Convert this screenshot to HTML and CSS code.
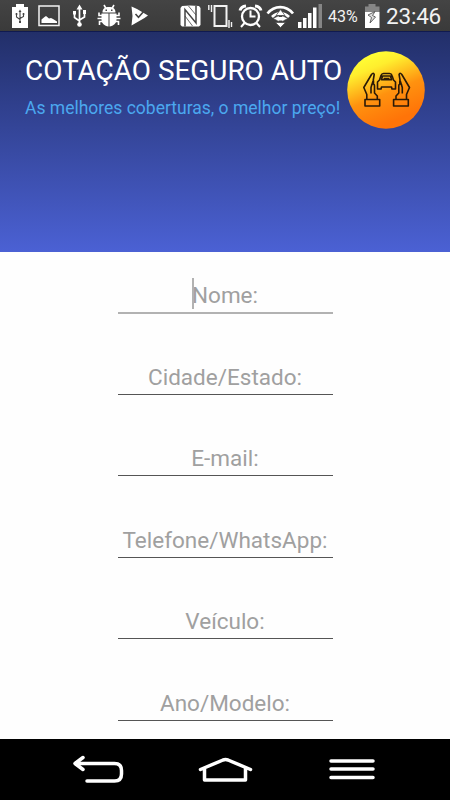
FILE: index.html
```html
<!DOCTYPE html>
<html lang="pt-BR">
<head>
    <meta charset="UTF-8">
    <meta name="viewport" content="width=device-width, initial-scale=1.0">
    <title>Cotação Seguro Auto</title>
    <link rel="stylesheet" href="styles.css">
</head>
<body>
    <div class="screen">
        <!-- Status bar -->
        <div class="status-bar">
            <div class="status-left">
                <svg width="23" height="32" viewBox="10 0 23 32">
                    <path fill="#fff" d="M16 4h8v3h4v21H12V7h4z"/>
                    <path fill="none" stroke="#444" stroke-width="1.1" d="M20 11v11M16.500 14v3l3.500 2.500M23.500 14v2.500L20 18.500"/>
                    <path fill="#444" d="M18.500 12l1.500-2.500 1.500 2.500zM19 21h2v2h-2zM15.700 13h1.600v2h-1.600zM22.700 13h1.600v2h-1.600z"/>
                </svg>
                <svg width="33" height="32" viewBox="33 0 33 32">
                    <path fill="none" stroke="#f2f2f2" stroke-width="1.500" d="M39 6h20v19.500H39z"/>
                    <path fill="#fff" d="M41.500 23v-3.500l3-2.500 1.500-1 3 2.500 2-.5 2 1 4 2.500V23z"/>
                </svg>
                <svg width="26" height="32" viewBox="66 0 26 32">
                    <path fill="none" stroke="#fff" stroke-width="1.700" d="M79.500 8v17M74.500 13v4.500l5 3.500M84.500 12v5l-5 3"/>
                    <path fill="#fff" d="M76.500 9.500l3-5 3 5zM73 11h3v3.500h-3zM83 10h3v4h-3z"/>
                    <circle cx="79.500" cy="24.500" r="2.300" fill="#fff"/>
                </svg>
                <svg width="35" height="32" viewBox="92 0 35 32">
                    <path fill="#fff" d="M102.500 12.500c0-4 2.500-5.500 6.500-5.500s6.500 1.500 6.500 5.500zM101.500 13.500h7V26.500c-4-.5-7-3-7-7zM109.500 13.500h7v6c0 4-3 6.500-7 7z"/>
                    <path fill="none" stroke="#fff" stroke-width="1.600" d="M106 8.500L104 5M112 8.500l2-3.500M102.500 15.500H99v-3M102.500 18.500h-5M103 21.500h-3.500V25M115.500 15.500h3.500v-3M115.500 18.500h5M115 21.500h3.500V25"/>
                    <path fill="#444" d="M105.500 9.500h1.500V11h-1.500zM111 9.500h1.500V11H111z"/>
                </svg>
                <svg width="30" height="32" viewBox="127 0 30 32">
                    <path fill="#fff" d="M131.500 6.500l5.500 2.500 11 6.500-3.500 2.500-13 7.500 1-9.500z"/>
                    <path fill="none" stroke="#444" stroke-width="1.600" d="M135.500 14l3 3.200 6-6.700"/>
                </svg>
            </div>
            <div class="status-right">
                <svg width="27" height="32" viewBox="177 0 27 32">
                    <path fill="#fff" d="M182 6l8-.5 9 .5 1.500 2v17l-1.500 1.500h-17L180.500 25V8z"/>
                    <path fill="none" stroke="#444" stroke-width="1.500" d="M185 26.500V9.500l11 13.500V6"/>
                    <path fill="none" stroke="#444" stroke-width=".8" d="M188.500 6l7.500 9M185 16l7.500 10"/>
                </svg>
                <svg width="32" height="32" viewBox="204 0 32 32">
                    <path fill="none" stroke="#f2f2f2" stroke-width="2" d="M214.500 6h12v20h-12z"/>
                    <path fill="none" stroke="#f2f2f2" stroke-width="1.400" d="M211.500 5v7M208.800 5v5M229 20v8M231.500 22v5"/>
                </svg>
                <svg width="29" height="32" viewBox="236 0 29 32">
                    <circle cx="250.500" cy="16.500" r="8.500" fill="none" stroke="#fff" stroke-width="2.300"/>
                    <path fill="none" stroke="#fff" stroke-width="2" d="M250.500 10.500v6h5M244.500 23l-3.500 4M256.500 23l3.500 4"/>
                    <path fill="none" stroke="#fff" stroke-width="3" d="M240 10.500q1-4 6-4.500M261 10.500q-1-4-6-4.500"/>
                </svg>
                <svg width="31" height="32" viewBox="265 0 31 32">
                    <path fill="none" stroke="#fff" stroke-width="2.700" d="M267.500 13.500c7-8.500 18.500-8.500 25.500 0M272 17c5-5 12-5 17 0"/>
                    <path fill="#fff" stroke="#444" stroke-width=".7" d="M280.500 27.500l-5-5h10zM280.500 9.500l4.500 6h-9zM273 18.500l6-3v6zM288 18.500l-6-3v6z"/>
                    <path fill="#fff" d="M277.500 17h6v3.500h-6z"/>
                </svg>
                <svg width="31" height="32" viewBox="296 0 31 32">
                    <path fill="#fff" d="M298 22h3.500v6H298zM303 18h3.500v10H303zM308 13h3.500v15H308zM313 7.500h3.500V28H313z"/>
                    <path fill="#858585" d="M318.500 4h3.500v24h-3.500z"/>
                </svg>
                <span class="battery-level">43%</span>
                <svg width="24" height="32" viewBox="362 0 24 32">
                    <path fill="#858585" d="M368.500 4h7v2.500h4V12H365V6.500h3.500z"/>
                    <path fill="#fff" d="M365 12h14.500v16H365z"/>
                    <path fill="#ddd" stroke="#555" stroke-width=".9" d="M375 11.500l-7 3.500 3.500 2.500-1.500 5.500 5.500-6-3-1.500z"/>
                </svg>
                <span class="clock">23:46</span>
            </div>
        </div>

        <header class="header">
            <div class="header-text">
                <h1>COTAÇÃO SEGURO AUTO</h1>
                <p>As melhores coberturas, o melhor preço!</p>
            </div>
            <svg class="logo" width="78" height="78" viewBox="0 0 78 78">
                <defs>
                    <linearGradient id="sun" x1=".25" y1=".05" x2=".6" y2=".9">
                        <stop offset="0" stop-color="#ffff35"/>
                        <stop offset=".2" stop-color="#ffee2e"/>
                        <stop offset=".6" stop-color="#ff920f"/>
                        <stop offset="1" stop-color="#ff7408"/>
                    </linearGradient>
                </defs>
                <circle cx="39" cy="39" r="38.800" fill="url(#sun)"/>
                <g fill="none" stroke="#2a1a08" stroke-width="1.600" stroke-linejoin="round">
                    <!-- hands -->
                    <path id="hand" d="M18 48.500h14.700V55H18zM19.800 48.500v-5l-3-7L24.500 23.500q2-2.500 2.700 0l-1 6-2.200 7v6M24.500 35q0-2 1.500-2t1.500 2v7l2.800 3v3.500M26.500 29.500V33"/>
                    <use href="#hand" transform="matrix(-1 0 0 1 79.300 0)"/>
                    <!-- car -->
                    <path d="M30.500 38v-7l2-2 1.500-4.500q.7-2 2.500-2h6q2 0 2.500 2l1.500 4.500 2 2v7h-3.500l-.5-2h-10l-.5 2zM34.500 28.800l1-3.800h8l1 3.800zM36.500 27.500h6"/>
                </g>
            </svg>
        </header>

        <form class="quote-form">
            <div class="field focused">
                <input type="text" placeholder="Nome:" aria-label="Nome">
                <span class="cursor"></span>
            </div>
            <div class="field">
                <input type="text" placeholder="Cidade/Estado:" aria-label="Cidade/Estado">
            </div>
            <div class="field">
                <input type="text" placeholder="E-mail:" aria-label="E-mail">
            </div>
            <div class="field">
                <input type="text" placeholder="Telefone/WhatsApp:" aria-label="Telefone/WhatsApp">
            </div>
            <div class="field">
                <input type="text" placeholder="Veículo:" aria-label="Veículo">
            </div>
            <div class="field">
                <input type="text" placeholder="Ano/Modelo:" aria-label="Ano/Modelo">
            </div>
        </form>

        <!-- Navigation bar -->
        <nav class="nav-bar">
            <svg width="52" height="32" viewBox="72 753 52 32">
                <path d="M83 757.500l-8 6 8 6M75 763.500h39.500q7 0 7 7v3.500q0 7-7 7H87"/>
            </svg>
            <svg width="56" height="32" viewBox="197.500 753 56 32">
                <path d="M200 769.500L222.500 760q2.500-.8 5 0l22.500 9.500M204 768.500V780h41v-11.500"/>
            </svg>
            <svg width="50" height="32" viewBox="327 753 50 32">
                <path d="M331 761h42M331 769h42M331 777.500h42"/>
            </svg>
        </nav>
    </div>
</body>
</html>
```

FILE: styles.css
```css
* {
    box-sizing: border-box;
}

body {
    margin: 0;
    background-color: #fefefe;
    font-family: Roboto, sans-serif;
}

svg {
    display: block;
    flex: none;
}

.screen {
    width: 450px;
    height: 800px;
    display: flex;
    flex-direction: column;
    overflow: hidden;
}

.status-bar {
    flex: none;
    height: 32px;
    padding: 0 8px 0 10px;
    display: flex;
    justify-content: space-between;
    background: linear-gradient(#444, #3a3a3a 31px, #101a50 31px);
    color: #f2f2f2;
}

.status-left,
.status-right {
    display: flex;
}

.battery-level {
    width: 35px;
    padding-left: 1px;
    font-size: 16px;
    line-height: 34px;
}

.clock {
    width: 56px;
    font-size: 22.5px;
    line-height: 33px;
    letter-spacing: -0.2px;
    white-space: nowrap;
}

.header {
    flex: none;
    height: 220px;
    padding: 19px 25px 0;
    display: flex;
    justify-content: space-between;
    align-items: flex-start;
    background: linear-gradient(#222f69, #4b61d4);
}

.header h1 {
    margin: 3px 0 0;
    font-size: 27.9px;
    font-weight: 400;
    line-height: 34px;
    color: #fff;
    white-space: nowrap;
}

.header p {
    margin: 9px 0 0;
    font-size: 17.5px;
    line-height: 22px;
    color: #4ba8ef;
    white-space: nowrap;
}

.header-text {
    width: 318px;
}

.quote-form {
    flex: 1;
    padding-top: 22px;
    display: flex;
    flex-direction: column;
    align-items: center;
    gap: 41.6px;
    overflow: hidden;
}

.field {
    position: relative;
    flex: none;
    width: 215px;
    height: 40px;
}

.field input {
    display: block;
    width: 100%;
    height: 39px;
    padding: 4px 0 0;
    border: none;
    border-bottom: 1px solid #555;
    background: none;
    font-family: inherit;
    font-size: 22.5px;
    text-align: center;
    outline: none;
}

.field input::placeholder {
    color: #a0a0a0;
    opacity: 1;
}

.focused input {
    height: 40px;
    padding-top: 3px;
    border-bottom: 2px solid #b2b2b2;
}

.cursor {
    position: absolute;
    left: 74px;
    top: 4px;
    width: 2px;
    height: 31px;
    background-color: #b2b2b2;
}

.nav-bar {
    flex: none;
    height: 61px;
    padding: 14px 73px 0 72px;
    display: flex;
    justify-content: space-between;
    align-items: flex-start;
    background-color: #000;
}

.nav-bar path {
    fill: none;
    stroke: #fff;
    stroke-width: 3.5;
    stroke-linecap: round;
    stroke-linejoin: round;
}
```
